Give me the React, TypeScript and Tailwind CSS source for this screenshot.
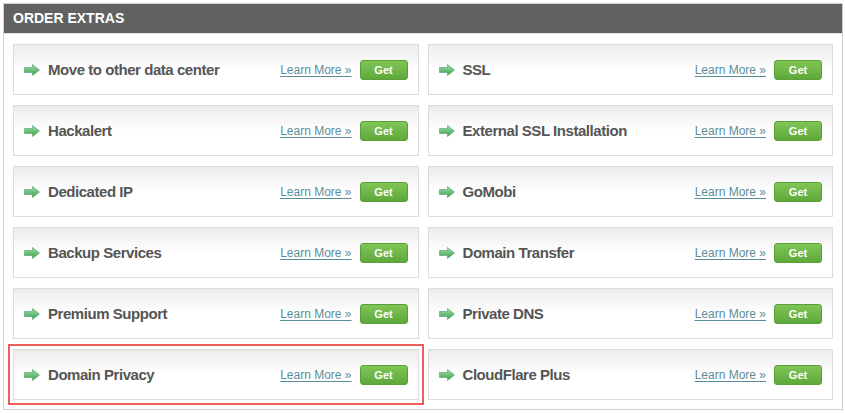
import React from "react";

type Extra = {
  name: string;
  highlight?: boolean;
};

const extras: Extra[] = [
  { name: "Move to other data center" },
  { name: "SSL" },
  { name: "Hackalert" },
  { name: "External SSL Installation" },
  { name: "Dedicated IP" },
  { name: "GoMobi" },
  { name: "Backup Services" },
  { name: "Domain Transfer" },
  { name: "Premium Support" },
  { name: "Private DNS" },
  { name: "Domain Privacy", highlight: true },
  { name: "CloudFlare Plus" },
];

function GreenArrow() {
  return (
    <svg width="16" height="12" viewBox="0 0 16 12" className="shrink-0">
      <defs>
        <linearGradient id="arrowGrad" x1="0" y1="0" x2="0" y2="1">
          <stop offset="0" stopColor="#a4dcae" />
          <stop offset="0.5" stopColor="#6cc07c" />
          <stop offset="1" stopColor="#3f9a52" />
        </linearGradient>
      </defs>
      <path d="M0.5 3.5 H8.5 V0.5 L15.5 6 L8.5 11.5 V8.5 H0.5 Z" fill="url(#arrowGrad)" stroke="#4ea15f" strokeWidth="0.6" />
    </svg>
  );
}

function ExtraCard({ item }: { item: Extra }) {
  return (
    <div className={item.highlight ? "outline-2 outline-offset-[3px] outline-[#ef5e57]" : ""}>
      <div className="h-[51px] border border-[#dcdcdc] bg-gradient-to-b from-[#ececec] via-white to-white flex items-center pl-[10px] pr-[10px] pt-[1px]">
        <GreenArrow />
        <span className="ml-[8px] text-[15px] font-bold text-[#555] tracking-[-0.45px]">{item.name}</span>
        <a href="#" className="ml-auto text-[12px] text-[#5b8d99] underline underline-offset-2">
          Learn More »
        </a>
        <button className="ml-[8px] w-[48px] h-[20px] rounded-[3px] border border-[#5b9f3a] bg-gradient-to-b from-[#80c656] to-[#5ea83a] text-white text-[11px] font-bold leading-none">
          Get
        </button>
      </div>
    </div>
  );
}

export default function App() {
  return (
    <div className="min-h-screen bg-white pt-[3px] pl-[3px]" style={{ fontFamily: '"Liberation Sans", Arial, sans-serif' }}>
      <div className="w-[840px] border border-[#cfcfcf] bg-white">
        <div className="h-[30px] bg-[#616161] border-b border-[#e2e2e2] flex items-center pl-[9px]">
          <h2 className="text-white text-[14px] font-bold">ORDER EXTRAS</h2>
        </div>
        <div className="grid grid-cols-2 gap-x-[9px] gap-y-[10px] px-[9px] pt-[10px] pb-[9px]">
          {extras.map((item) => (
            <ExtraCard key={item.name} item={item} />
          ))}
        </div>
      </div>
    </div>
  );
}
